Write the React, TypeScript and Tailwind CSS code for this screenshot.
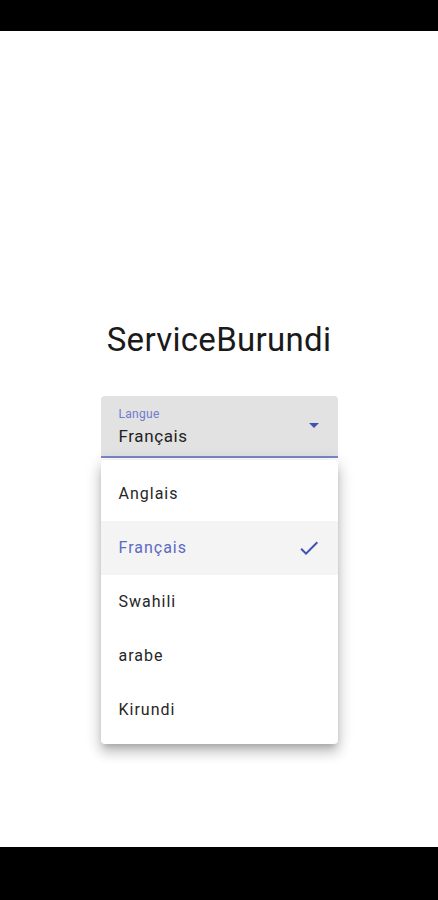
const options = ['Anglais', 'Français', 'Swahili', 'arabe', 'Kirundi'];

export default function App() {
  const selected = 'Français';

  return (
    <div className="flex h-[900px] w-[438px] flex-col bg-white" style={{ fontFamily: 'Roboto, sans-serif' }}>
      {/* status bar */}
      <div className="h-[31px] w-full shrink-0 bg-black" />

      <div className="flex flex-1 flex-col items-center pt-[290px]">
        <h1 className="text-[33px] font-normal leading-[37px] tracking-[0.3px] text-[#1a1a1a]">ServiceBurundi</h1>

        <div className="relative mt-[38px] w-[237px]">
          {/* select field */}
          <div className="flex h-[62px] items-center rounded-t-[4px] border-b-2 border-[#7986cb] bg-[#e2e2e2] pl-[18px] pr-[18px]">
            <div className="flex flex-1 flex-col pt-[1px]">
              <span className="text-[12px] leading-[14px] tracking-[0.3px] text-[#6f7bd0]">Langue</span>
              <span className="mt-[5px] text-[17px] leading-[20px] tracking-[0.6px] text-[#222]">{selected}</span>
            </div>
            <svg width="10" height="5" viewBox="0 0 10 5" className="mb-[2px] mr-[1px]">
              <path d="M0 0 L10 0 L5 5 Z" fill="#3f51b5" />
            </svg>
          </div>

          {/* dropdown menu */}
          <div className="absolute left-0 right-0 top-[64px] rounded-[4px] bg-white py-[7px] shadow-[0_5px_6px_-3px_rgba(0,0,0,0.2),0_9px_12px_1px_rgba(0,0,0,0.14),0_3px_16px_2px_rgba(0,0,0,0.12)]">
            {options.map((opt) => {
              const active = opt === selected;
              return (
                <div
                  key={opt}
                  className={`flex h-[54px] items-center justify-between pl-[18px] pr-[17px] ${active ? 'bg-[#f4f4f4]' : ''}`}
                >
                  <span className={`text-[16px] tracking-[1px] ${active ? 'text-[#5c6bc0]' : 'text-[#262626]'}`}>{opt}</span>
                  {active && (
                    <svg width="24" height="24" viewBox="0 0 24 24">
                      <path d="M9 16.17 4.83 12l-1.42 1.41L9 19 21 7l-1.41-1.41z" fill="#3f51b5" />
                    </svg>
                  )}
                </div>
              );
            })}
          </div>
        </div>
      </div>

      {/* nav bar */}
      <div className="h-[53px] w-full shrink-0 bg-black" />
    </div>
  );
}
